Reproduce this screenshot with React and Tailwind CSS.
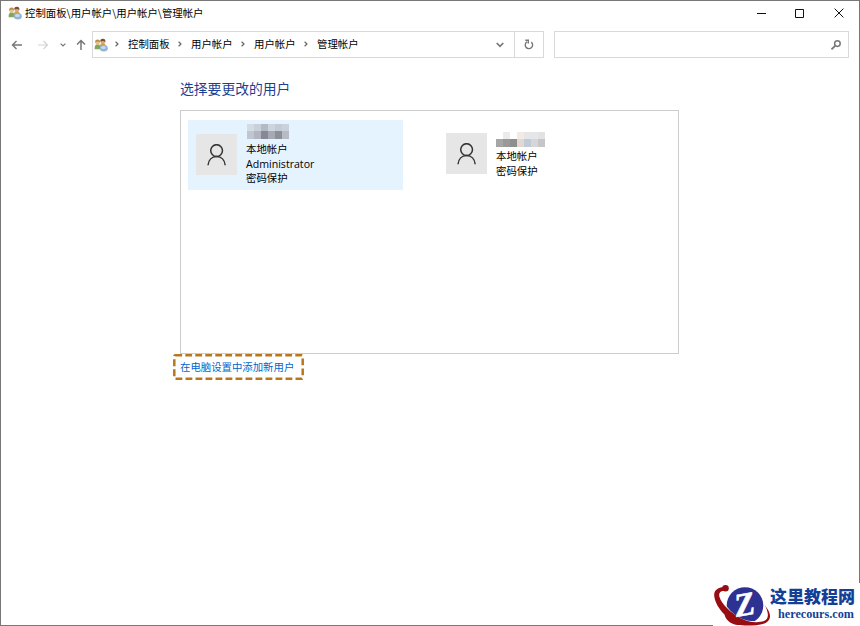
const stroke = { fill: "none", stroke: "currentColor" };

function UsersIcon({ className }) {
  return (
    <svg viewBox="0 0 14 14" className={className}>
      <path d="M6 8c0-2 1-3 3-3s3 2 3 5H6z" fill="#c9a24a" />
      <circle cx="8.8" cy="3.6" r="2.4" fill="#d9a67c" />
      <path d="M6.3 3.5C6.2 1.4 7.3.7 8.9.7c2 0 2.9 1.3 2.4 3.6-.7-1.5-3-1.7-5-.8z" fill="#7b4c38" />
      <path d="M.6 11.3C.4 7.8 1.5 6.3 3.6 6.3s3.2 1.5 3.1 5z" fill="#7fa85c" />
      <circle cx="3.6" cy="4.5" r="2.4" fill="#e8c08c" />
      <path d="M1.2 4.5C1 2.3 2 1.5 3.6 1.5s2.7.9 2.4 2.7c-1.5-.9-3-.9-4.8.3z" fill="#b98e44" />
      <ellipse cx="9.8" cy="10.3" rx="4" ry="3.3" fill="#94b4d4" />
      <ellipse cx="9.4" cy="9.5" rx="2.4" ry="1.5" fill="#c3dcf0" />
    </svg>
  );
}

function Chevron({ className }) {
  return (
    <svg viewBox="0 0 4 6" className={"relative -top-px h-[6px] w-[4px] shrink-0 text-[#666] " + className}>
      <path d="M.6.7 3 3 .6 5.3" {...stroke} strokeWidth="1.2" />
    </svg>
  );
}

function Avatar() {
  return (
    <div className="flex h-[41px] w-[41px] shrink-0 items-center justify-center bg-[#e6e6e6] text-[#333]">
      <svg viewBox="0 0 20 22" className="h-[22px] w-[20px]">
        <circle cx="9.6" cy="6.6" r="5.9" {...stroke} strokeWidth="1.5" />
        <path d="M1 21.3C1.500 16.200 4.800 12.600 9.600 12.600s8.100 3.600 8.600 8.700" {...stroke} strokeWidth="1.5" />
      </svg>
    </div>
  );
}

function Mosaic({ rows }) {
  return (
    <div>
      {rows.map((row, i) => (
        <div key={i} className="flex">
          {row.map((color, j) => (
            <span key={j} className={i === 0 ? "h-[7px] w-[7px]" : "h-[8px] w-[7px]"} style={{ backgroundColor: color }} />
          ))}
        </div>
      ))}
    </div>
  );
}

const adminMosaic = [
  ["#d3dbe3", "#c9d0da", "#b4bac4", "#ccd4de", "#c3cbd5", "#c9d1da"],
  ["#c0c6cf", "#b0b6c1", "#868893", "#a5a9b4", "#8b8f9a", "#b6bbc5"],
];
const userMosaic = [
  ["#ffffff", "#ebebeb", "#ffffff", "#f0ebe6", "#e6e6e9", "#e4e6ea", "#e2e2e2"],
  ["#a6a6a6", "#999999", "#8e8e8e", "#e0d8d1", "#c0cad8", "#d6d6d9", "#c6c6c8"],
];

const crumbs = ["控制面板", "用户帐户", "用户帐户", "管理帐户"];

function TitleBar() {
  return (
    <div className="flex h-[24px] items-center pl-[7px] pr-[15px]">
      <UsersIcon className="h-[14px] w-[14px]" />
      <span className="ml-[3px] -translate-y-px whitespace-pre">控制面板\用户帐户\用户帐户\管理帐户</span>
      <div className="ml-auto flex items-center text-[#111]">
        <svg viewBox="0 0 9 9" className="mr-[29px] h-[9px] w-[9px]"><path d="M0 4.500h9" {...stroke} /></svg>
        <svg viewBox="0 0 9 9" className="mr-[30px] h-[9px] w-[9px]"><path d="M.5.5h8v8h-8z" {...stroke} /></svg>
        <svg viewBox="0 0 10 10" className="h-[10px] w-[10px]"><path d="m.6.6 8.800 8.800m0-8.800L.6 9.400" {...stroke} /></svg>
      </div>
    </div>
  );
}

function NavBar() {
  return (
    <div className="mt-[6px] flex h-[27px] items-center text-[#777]">
      <svg viewBox="0 0 12 10" className="ml-[10px] h-[10px] w-[12px]"><path d="M11 5H1.500M5.500 1l-4 4 4 4" {...stroke} strokeWidth="1.4" /></svg>
      <svg viewBox="0 0 12 10" className="ml-[14px] h-[10px] w-[12px] text-[#d4d4d4]"><path d="M1 5h9.500M6.500 1l4 4-4 4" {...stroke} strokeWidth="1.2" /></svg>
      <svg viewBox="0 0 6 4" className="ml-[11px] h-[4px] w-[6px]"><path d="m.6.6 2.400 2.400L5.400.6" {...stroke} strokeWidth="1.2" /></svg>
      <svg viewBox="0 0 10 12" className="ml-[10px] h-[12px] w-[10px]"><path d="M5 11V1.500M1 5.500l4-4 4 4" {...stroke} strokeWidth="1.5" /></svg>
      <div className="ml-[6px] flex h-[27px] w-[452px] items-center border border-[#d9d9d9]">
        <UsersIcon className="ml-[1px] h-[14px] w-[14px]" />
        <Chevron className="ml-[7px] mr-[9px]" />
        {crumbs.map((text, i) => (
          <span key={i} className="flex items-center">
            <span className="w-[42px] -translate-y-[1.5px] whitespace-nowrap text-black">{text}</span>
            {i < 3 && <Chevron className="ml-[8px] mr-[9px]" />}
          </span>
        ))}
        <svg viewBox="0 0 8 6" className="ml-auto mr-[10px] h-[6px] w-[8px]"><path d="m.7 1 3.300 3.300L7.300 1" {...stroke} strokeWidth="1.700" /></svg>
        <div className="flex h-full w-[29px] items-center justify-center border-l border-[#d9d9d9]">
          <svg viewBox="0 0 10 11" className="h-[11px] w-[10px]">
            <path d="M7.300 3.100a3.700 3.700 0 1 1-4.300-.300M1.300 1.300h3v3.200" {...stroke} strokeWidth="1.400" />
          </svg>
        </div>
      </div>
      <div className="ml-[10px] flex h-[27px] w-[295px] items-center justify-end border border-[#d9d9d9] pr-[7px]">
        <svg viewBox="0 0 10 10" className="h-[10px] w-[10px]">
          <circle cx="6.400" cy="3.600" r="2.800" {...stroke} strokeWidth="1.500" />
          <path d="M4.400 5.600.5 9.300" {...stroke} strokeWidth="1.700" />
        </svg>
      </div>
    </div>
  );
}

function SiteLogo() {
  return (
    <div className="absolute bottom-0 right-0 flex h-[43px] w-[147px] bg-white text-[#143f97]">
      <svg viewBox="0 0 57 43" className="h-[43px] w-[57px] shrink-0">
        <circle cx="32" cy="22.500" r="18.300" fill="#2c3192" />
        <path d="M7.500 9C6 14 10 22 17 29c7 7 16 11 27 10.500" fill="none" stroke="#fff" strokeWidth="2.400" />
        <path d="M11 4C4 4.500.5 8 1.300 13.500 2.300 20 6 26 11.500 31.500c1 4.500 5 9.500 13 10.500 8 .8 20 .8 27-1.500 7-3 7.500-9.500.5-18 4 8 4 13.500-1 15.500-6 2.200-16 1.200-23-2.500C18 30 8.500 21 6.500 14 5.500 10 7 8 12 7.500z" fill="#960d12" />
        <circle cx="12.500" cy="5.300" r="3.300" fill="#960d12" />
        <text x="31.500" y="32.500" transform="rotate(-10 31 22)" textAnchor="middle" fontSize="33" fontWeight="700" fontStyle="italic" fontFamily="Liberation Serif, serif" fill="#fff" stroke="#fff" strokeWidth=".6">Z</text>
      </svg>
      <div className="pt-[3px]">
        <div className="whitespace-nowrap font-['Noto_Sans_CJK_SC',sans-serif] text-[17px] font-black leading-[20px]">这里教程网</div>
        <div className="ml-[8px] mt-px font-['Liberation_Serif',serif] text-[12.200px] font-bold leading-[14px]">herecours.com</div>
      </div>
    </div>
  );
}

export default function App() {
  return (
    <div className="relative h-[626px] w-[860px] overflow-hidden bg-white font-['Noto_Sans_CJK_SC',sans-serif] text-[10.400px] leading-[15px] text-black">
      <div className="flex h-full w-full flex-col border border-[#777]">
        <TitleBar />
        <NavBar />
        <main className="ml-[179px] mt-[20px] flex flex-col items-start">
          <h1 className="text-[13.800px] leading-[20px] text-[#1c3f94]">选择要更改的用户</h1>
          <div className="mt-[12px] flex h-[244px] w-[499px] items-start border border-[#ccc] pl-[7px] pt-[9px]">
            <div className="flex h-[70px] w-[215px] bg-[#e5f3ff] pl-[8px] pt-[4px]">
              <div className="pt-[10px]"><Avatar /></div>
              <div className="ml-[9px]">
                <div className="ml-px"><Mosaic rows={adminMosaic} /></div>
                <div className="pt-[3px] leading-[14.600px]">
                  <div>本地帐户</div>
                  <div className="font-['Open_Sans',sans-serif] text-[10.600px]">Administrator</div>
                  <div>密码保护</div>
                </div>
              </div>
            </div>
            <div className="ml-[43px] flex pt-[12px]">
              <div className="pt-px"><Avatar /></div>
              <div className="ml-[9px]">
                <Mosaic rows={userMosaic} />
                <div className="pt-[2px] leading-[14.600px]">
                  <div>本地帐户</div>
                  <div>密码保护</div>
                </div>
              </div>
            </div>
          </div>
          <div className="relative -ml-[7px] flex h-[26px] w-[131px] items-center pb-[2px] pl-[7px] text-[#0066cc]">
            <svg viewBox="0 0 131 26" className="absolute inset-0 h-[26px] w-[131px]">
              <rect x="1.300" y="1.300" width="128.400" height="23.400" rx="1" fill="none" stroke="#b8771c" strokeWidth="2.500" strokeDasharray="6.800 3.200" />
            </svg>
            <a className="whitespace-nowrap">在电脑设置中添加新用户</a>
          </div>
        </main>
      </div>
      <SiteLogo />
    </div>
  );
}
